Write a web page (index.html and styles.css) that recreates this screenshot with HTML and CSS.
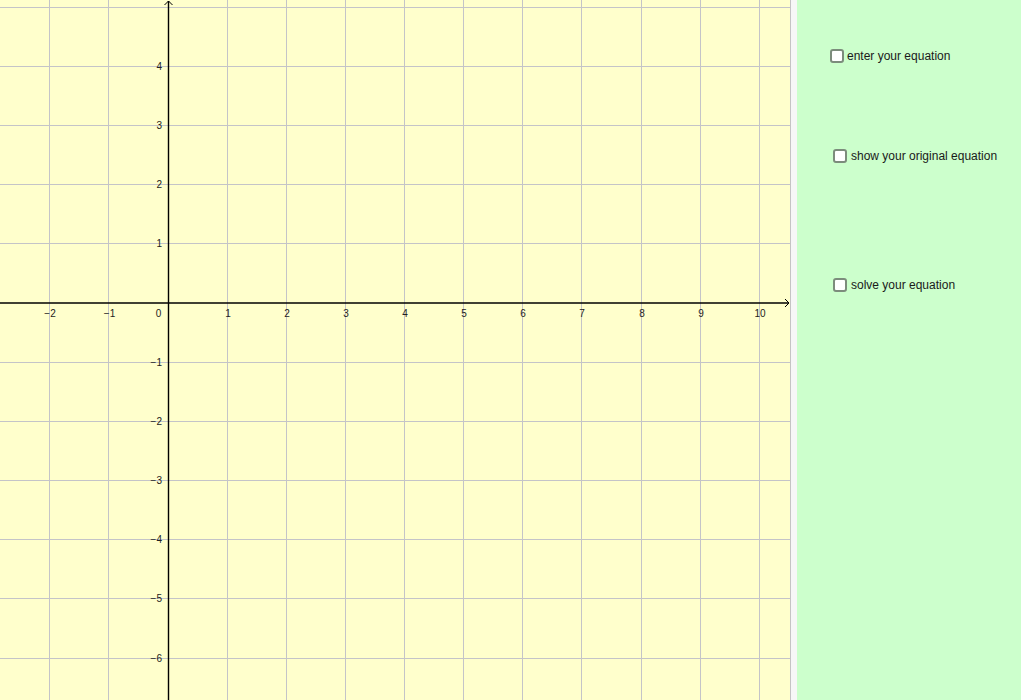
FILE: index.html
```html
<!DOCTYPE html>
<html>
<head>
<meta charset="utf-8">
<link rel="stylesheet" href="styles.css">
</head>
<body>
<div class="app">
  <div class="graph">
    <svg width="790" height="700" viewBox="0 0 790 700" xmlns="http://www.w3.org/2000/svg">
      <rect x="0" y="0" width="790" height="700" fill="#ffffcc"/>
      <g class="grid" stroke="#c4c4c8" stroke-width="1">
        <line x1="49.5" y1="0" x2="49.5" y2="700"/>
        <line x1="108.5" y1="0" x2="108.5" y2="700"/>
        <line x1="227.5" y1="0" x2="227.5" y2="700"/>
        <line x1="286.5" y1="0" x2="286.5" y2="700"/>
        <line x1="345.5" y1="0" x2="345.5" y2="700"/>
        <line x1="404.5" y1="0" x2="404.5" y2="700"/>
        <line x1="463.5" y1="0" x2="463.5" y2="700"/>
        <line x1="522.5" y1="0" x2="522.5" y2="700"/>
        <line x1="581.5" y1="0" x2="581.5" y2="700"/>
        <line x1="641.5" y1="0" x2="641.5" y2="700"/>
        <line x1="700.5" y1="0" x2="700.5" y2="700"/>
        <line x1="759.5" y1="0" x2="759.5" y2="700"/>
        <line x1="0" y1="7.5" x2="790" y2="7.5"/>
        <line x1="0" y1="66.5" x2="790" y2="66.5"/>
        <line x1="0" y1="125.5" x2="790" y2="125.5"/>
        <line x1="0" y1="184.5" x2="790" y2="184.5"/>
        <line x1="0" y1="243.5" x2="790" y2="243.5"/>
        <line x1="0" y1="362.5" x2="790" y2="362.5"/>
        <line x1="0" y1="421.5" x2="790" y2="421.5"/>
        <line x1="0" y1="480.5" x2="790" y2="480.5"/>
        <line x1="0" y1="539.5" x2="790" y2="539.5"/>
        <line x1="0" y1="598.5" x2="790" y2="598.5"/>
        <line x1="0" y1="658.5" x2="790" y2="658.5"/>
      </g>
      <g class="axes" stroke="#000" stroke-width="1.4" fill="none">
        <line x1="168.5" y1="1" x2="168.5" y2="700"/>
        <polyline points="164.5,5 168.5,1 172.5,5" stroke-width="1"/>
        <line x1="0" y1="303" x2="789" y2="303"/>
        <polyline points="785,299 789,303 785,307" stroke-width="1"/>
      </g>
      <g class="xlabels" text-anchor="middle">
        <text x="50" y="317">−2</text>
        <text x="109.5" y="317">−1</text>
        <text x="158.5" y="317">0</text>
        <text x="228" y="317">1</text>
        <text x="287" y="317">2</text>
        <text x="346" y="317">3</text>
        <text x="405" y="317">4</text>
        <text x="464" y="317">5</text>
        <text x="523" y="317">6</text>
        <text x="582" y="317">7</text>
        <text x="642" y="317">8</text>
        <text x="701" y="317">9</text>
        <text x="760" y="317">10</text>
      </g>
      <g class="ylabels" text-anchor="end">
        <text x="162" y="70">4</text>
        <text x="162" y="129">3</text>
        <text x="162" y="188">2</text>
        <text x="162" y="247">1</text>
        <text x="162" y="366">−1</text>
        <text x="162" y="425">−2</text>
        <text x="162" y="484">−3</text>
        <text x="162" y="543">−4</text>
        <text x="162" y="602">−5</text>
        <text x="162" y="662">−6</text>
      </g>
    </svg>
  </div>
  <div class="divider"></div>
  <div class="panel">
    <label class="item item-1"><span class="box"></span><span class="text">enter your equation</span></label>
    <label class="item item-2"><span class="box"></span><span class="text">show your original equation</span></label>
    <label class="item item-3"><span class="box"></span><span class="text">solve your equation</span></label>
  </div>
</div>
</body>
</html>
```

FILE: styles.css
```css
html, body {
  margin: 0;
  padding: 0;
  background: #ffffff;
}
.app {
  display: flex;
  width: 1021px;
  height: 700px;
  overflow: hidden;
}
.graph {
  width: 790px;
  height: 700px;
  flex: none;
  border-right: 1px solid #c4c4c4;
}
.graph svg {
  display: block;
}
.graph text {
  font-family: "Liberation Sans", Arial, sans-serif;
  font-size: 10px;
  fill: #222;
}
.divider {
  width: 6px;
  flex: none;
  background: #f7f7f7;
}
.panel {
  flex: 1;
  background: #ccffcc;
  display: flex;
  flex-direction: column;
  align-items: flex-start;
}
.item {
  display: flex;
  align-items: center;
  gap: 4px;
  font-family: "Liberation Sans", Arial, sans-serif;
  font-size: 12px;
  color: #1a1a1a;
  height: 14px;
}
.item-1 { margin-top: 49px; margin-left: 33px; gap: 3px; }
.item-2 { margin-top: 86px; margin-left: 36px; }
.item-3 { margin-top: 115px; margin-left: 36px; }
.box {
  width: 10px;
  height: 10px;
  border: 2px solid #7c8c7c;
  border-radius: 3px;
  background: #ffffff;
  flex: none;
}
```
